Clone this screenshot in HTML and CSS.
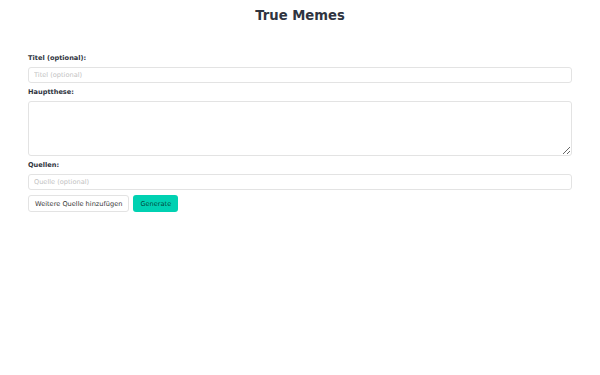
FILE: index.html
```html
<!DOCTYPE html>
<html lang="de">

<head>
    <meta charset="UTF-8">
    <meta name="viewport" content="width=device-width, initial-scale=1.0">
    <title>True Memes</title>
    <link rel="stylesheet" href="styles.css">
</head>

<body>
    <header>
        <h1 class="title">True Memes</h1>
    </header>
    <section class="container">
        <form class="meme-form">
            <div class="field">
                <label for="titel">Titel (optional):</label>
                <input type="text" id="titel" placeholder="Titel (optional)">
            </div>
            <div class="field">
                <label for="these">Hauptthese:</label>
                <textarea id="these"></textarea>
            </div>
            <div class="field">
                <label for="quelle">Quellen:</label>
                <input type="text" id="quelle" placeholder="Quelle (optional)">
            </div>
            <div class="buttons">
                <button type="button" class="button">Weitere Quelle hinzufügen</button>
                <button type="button" class="button is-primary">Generate</button>
            </div>
        </form>
    </section>
</body>

</html>
```

FILE: styles.css
```css
body {
    font-family: "DejaVu Sans", sans-serif;
    margin: 0;
    padding: 0;
    background: #fff;
    color: #363636;
}

header {
    padding-top: 8px;
    text-align: center;
}

.title {
    margin: 0;
    font-size: 13.2px;
    line-height: 16px;
    font-weight: bold;
    color: #2f3440;
}

.container {
    padding: 30px 28px 0;
}

.field {
    margin-bottom: 5px;
}

.field label {
    display: block;
    font-size: 6.6px;
    line-height: 8px;
    font-weight: bold;
    margin-bottom: 5px;
    color: #2f3440;
}

.field input,
.field textarea {
    display: block;
    box-sizing: border-box;
    width: 100%;
    margin: 0;
    padding: 0 5px;
    height: 16px;
    font-family: inherit;
    font-size: 6.6px;
    color: #363636;
    background: #fff;
    border: 1px solid #e3e3e3;
    border-radius: 3px;
    outline: none;
}

.field textarea {
    height: 55px;
    padding: 4px 5px;
    resize: vertical;
}

.field input::placeholder {
    color: #c2c2c2;
}

.buttons {
    display: flex;
    gap: 4px;
}

.button {
    box-sizing: border-box;
    height: 17px;
    padding: 0 6px;
    font-family: inherit;
    font-size: 6.6px;
    color: #363636;
    background: #fff;
    border: 1px solid #e3e3e3;
    border-radius: 3px;
    cursor: pointer;
}

.button.is-primary {
    background: #00d1b2;
    border-color: transparent;
    color: rgba(0, 0, 0, 0.7);
}
```
